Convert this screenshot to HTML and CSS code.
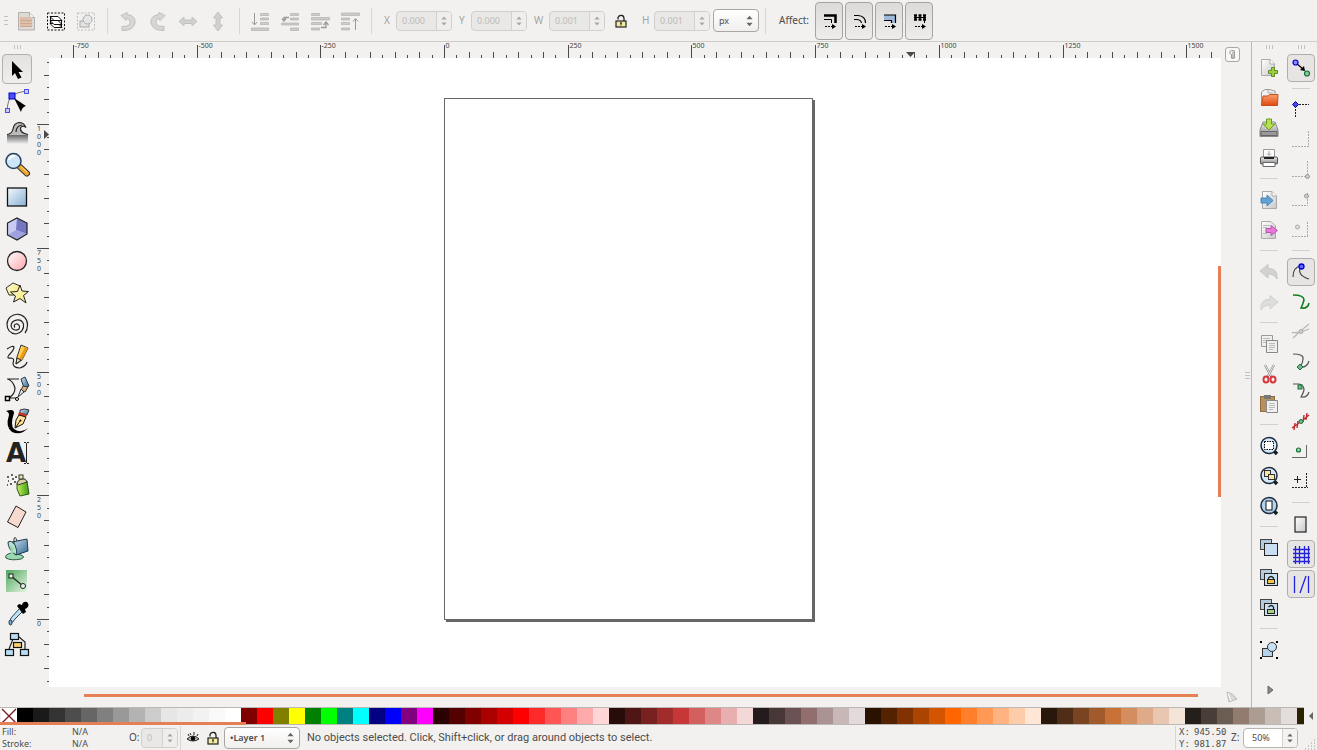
FILE: index.html
```html
<!DOCTYPE html>
<html lang="en">
<head>
<meta charset="utf-8">
<title>Drawing editor</title>
<link rel="stylesheet" href="styles.css">
</head>
<body>
<svg class="defs" width="0" height="0" aria-hidden="true">
<defs>
<linearGradient id="blue" x1="0" y1="0" x2="1" y2="1"><stop offset="0" stop-color="#f4f9fd"/><stop offset="1" stop-color="#87afd4"/></linearGradient>
<linearGradient id="pink" x1="0" y1="0" x2="1" y2="1"><stop offset="0" stop-color="#fff"/><stop offset="1" stop-color="#ffa4ac"/></linearGradient>
<linearGradient id="yellow" x1="0" y1="0" x2="1" y2="1"><stop offset="0" stop-color="#fffde0"/><stop offset="1" stop-color="#f4e468"/></linearGradient>
<linearGradient id="green" x1="0" y1="0" x2="1" y2="1"><stop offset="0" stop-color="#4fa65c"/><stop offset="1" stop-color="#e6f6e4"/></linearGradient>
<linearGradient id="lime" x1="0" y1="0" x2="1" y2="0"><stop offset="0" stop-color="#c4f060"/><stop offset="1" stop-color="#3f9a10"/></linearGradient>
<linearGradient id="steel" x1="0" y1="0" x2="1" y2="1"><stop offset="0" stop-color="#cfe4f2"/><stop offset="1" stop-color="#2f648e"/></linearGradient>
<linearGradient id="grey" x1="0" y1="0" x2="0" y2="1"><stop offset="0" stop-color="#666"/><stop offset="1" stop-color="#f0f0f0"/></linearGradient>
<linearGradient id="orange" x1="0" y1="0" x2="0" y2="1"><stop offset="0" stop-color="#f9a070"/><stop offset="1" stop-color="#e04a0c"/></linearGradient>
<linearGradient id="metal" x1="0" y1="0" x2="0" y2="1"><stop offset="0" stop-color="#eee"/><stop offset="1" stop-color="#888"/></linearGradient>
<linearGradient id="sheet" x1="0" y1="0" x2="1" y2="1"><stop offset="0" stop-color="#fff"/><stop offset="1" stop-color="#c8c8c8"/></linearGradient>
<symbol id="padlock" viewBox="0 0 12 14"><path d="M3 5.500V3.500Q4 1 7 1.500Q9.500 2 9 7" fill="none" stroke="#222" stroke-width="1.300"/><rect x="1" y="7" width="10" height="6" fill="#f3eca0" stroke="#222" stroke-width="1.200"/><path d="M6 8.500v3M5 9h2" stroke="#222"/></symbol>
<symbol id="updown" viewBox="0 0 8 12"><path d="M0.500 4L4 0L7.500 4ZM0.500 8L4 12L7.500 8Z" fill="currentColor"/></symbol>
</defs>
</svg>

<header class="toolbar">
  <span class="grip grip-row"></span>
  <button class="tool" aria-label="Select all"><svg viewBox="0 0 30 30"><path d="M7.500 6.500h11l5 5v12.500h-16Z" fill="#dedad6" stroke="#b5b0ab"/><path d="M18.500 6.500v5h5" fill="#f4f2f0" stroke="#b5b0ab"/><rect x="9" y="11" width="12" height="10" fill="#dcc0ac"/><path d="M9 14.500h12M9 17.500h12M9 20.500h12" stroke="#cda88f"/></svg></button>
  <button class="tool" aria-label="Select all in all layers"><svg viewBox="0 0 30 30"><rect x="6.500" y="7" width="17" height="17" fill="none" stroke="#111" stroke-dasharray="2 1.500"/><g fill="#fff" stroke="#111"><path d="M9 17.500h8l4 4h-8Z"/><path d="M9 14.500h8l4 4h-8Z"/><path d="M9 10.500h8l4 4h-8Z"/></g><path d="M9.500 11v7M20.500 15v6" stroke="#111"/></svg></button>
  <button class="tool" aria-label="Deselect"><svg viewBox="0 0 30 30"><rect x="6.500" y="7" width="17" height="17" fill="none" stroke="#bbb" stroke-dasharray="2 1.500"/><rect x="9" y="15" width="9" height="6" fill="#e2e2e2" stroke="#aaa"/><circle cx="16.500" cy="13.500" r="4.500" fill="#e6e6e6" stroke="#aaa"/></svg></button>
  <span class="sep"></span>
  <button class="tool" aria-label="Rotate left"><svg viewBox="0 0 30 30"><path d="M9 20.500Q15 21 17 18Q18 14 14 12L13 14.500L8 9.500L14 6.500L14.500 8.500Q23 10 22 17Q20 25 9 24.500Z" fill="#d6d6d5" stroke="#bfbfbe"/></svg></button>
  <button class="tool" aria-label="Rotate right"><svg viewBox="0 0 30 30"><path d="M21 20.500Q15 21 13 18Q12 14 16 12L17 14.500L22 9.500L16 6.500L15.500 8.500Q7 10 8 17Q10 25 21 24.500Z" fill="#d6d6d5" stroke="#bfbfbe"/></svg></button>
  <button class="tool" aria-label="Flip horizontal"><svg viewBox="0 0 30 30"><path d="M6 15.500L11 11V14H19V11L24 15.500L19 20V17.500H11V20Z" fill="#d0d0d0" stroke="#c2c2c2"/></svg></button>
  <button class="tool" aria-label="Flip vertical"><svg viewBox="0 0 30 30"><path d="M15 6L10.500 12H13V19H10.500L15 25L19.500 19H17V12H19.500Z" fill="#d0d0d0" stroke="#c2c2c2"/></svg></button>
  <span class="sep"></span>
  <button class="tool" aria-label="Lower to bottom"><svg viewBox="0 0 30 30"><g fill="#ccc" stroke="#aaa" stroke-width=".6"><path d="M15.500 7.500h8v2h-8zM15.500 12h8v2h-8zM15.500 16.500h8v2h-8zM6.500 22h17v2.500h-17z"/></g><path d="M9.500 7v11M7 16l2.500 3L12 16" fill="none" stroke="#999"/></svg></button>
  <button class="tool" aria-label="Lower"><svg viewBox="0 0 30 30"><g fill="#ccc" stroke="#aaa" stroke-width=".6"><path d="M15.500 7.500h8v2h-8zM15.500 12h8v2h-8zM6.500 17h17v2h-17zM15.500 22h8v2.500h-8z"/></g><path d="M14 11.500H9v3M7 12.500l2 2.500l2-2.500" fill="none" stroke="#999" stroke-width="1.300"/></svg></button>
  <button class="tool" aria-label="Raise"><svg viewBox="0 0 30 30"><g fill="#ccc" stroke="#aaa" stroke-width=".6"><path d="M6.500 7.500h8v2h-8zM6.500 11.500h18v2.500h-18zM6.500 16.500h10v2h-10zM6.500 22h8v2h-8z"/></g><path d="M16 21.500h5v-4M18.500 19l2.500-3l2.500 3" fill="none" stroke="#999" stroke-width="1.300"/></svg></button>
  <button class="tool" aria-label="Raise to top"><svg viewBox="0 0 30 30"><g fill="#ccc" stroke="#aaa" stroke-width=".6"><path d="M6.500 7h18v2.500h-18zM6.500 12h8v2h-8zM6.500 16.500h8v2h-8zM6.500 22h8v2h-8z"/></g><path d="M20.500 24V13M18 15.500l2.500-3l2.500 3" fill="none" stroke="#999"/></svg></button>
  <span class="sep"></span>
  <label class="field" for="fx">X</label>
  <span class="spin off"><input id="fx" value="0.000" disabled><button disabled aria-label="Step X"><svg viewBox="0 0 8 12"><use href="#updown"/></svg></button></span>
  <label class="field" for="fy">Y</label>
  <span class="spin off"><input id="fy" value="0.000" disabled><button disabled aria-label="Step Y"><svg viewBox="0 0 8 12"><use href="#updown"/></svg></button></span>
  <label class="field wide" for="fw">W</label>
  <span class="spin off"><input id="fw" value="0.001" disabled><button disabled aria-label="Step W"><svg viewBox="0 0 8 12"><use href="#updown"/></svg></button></span>
  <button class="lock" aria-label="Lock ratio"><svg viewBox="0 0 12 14"><use href="#padlock"/></svg></button>
  <label class="field" for="fh">H</label>
  <span class="spin off"><input id="fh" value="0.001" disabled><button disabled aria-label="Step H"><svg viewBox="0 0 8 12"><use href="#updown"/></svg></button></span>
  <span class="drop unit"><select aria-label="Unit"><option>px</option></select><svg viewBox="0 0 8 12"><use href="#updown"/></svg></span>
  <span class="sep"></span>
  <span class="affect">Affect:</span>
  <div class="affects">
    <button aria-label="Scale stroke width"><svg viewBox="0 0 28 36"><path d="M8 12.500H19.500V20" fill="none" stroke="#000" stroke-width="2.500"/><path d="M8 16.500H15.500V20" fill="none" stroke="#000"/><path d="M9 23.500h7" stroke="#000" stroke-dasharray="2 1"/><path d="M16 21l4 2.500l-4 2.500Z"/></svg></button>
    <button aria-label="Scale rounded corners"><svg viewBox="0 0 28 36"><path d="M8 12.500H12Q19.500 13 19.500 20M8 16.500H11Q15 17 15.500 20" fill="none" stroke="#000" stroke-width="1.200"/><path d="M9 23.500h7" stroke="#000" stroke-dasharray="2 1"/><path d="M16 21l4 2.500l-4 2.500Z"/></svg></button>
    <button aria-label="Move gradients"><svg viewBox="0 0 28 36"><path d="M8 12H19.500V20H16V17H8Z" fill="#9eb9da"/><path d="M8 12H19.500V20M8 17.500H15.500V20" fill="none" stroke="#000" stroke-width="1.200"/><path d="M9 23.500h7" stroke="#000" stroke-dasharray="2 1"/><path d="M16 21l4 2.500l-4 2.500Z"/></svg></button>
    <button aria-label="Move patterns"><svg viewBox="0 0 28 36"><path d="M8 12.500H20M8 16.500H20" stroke="#000" stroke-width="2.500" stroke-dasharray="3 1.500"/><path d="M8 14.500H20M9.500 12v5M14 12v5M18.500 12v8" stroke="#000"/><path d="M9 23.500h7" stroke="#000" stroke-dasharray="2 1"/><path d="M16 21l4 2.500l-4 2.500Z"/></svg></button>
  </div>
</header>

<main class="work">
  <nav class="toolbox" aria-label="Tools">
    <span class="grip grip-col"></span>
    <button class="on" aria-label="Selector"><svg viewBox="0 0 32 32"><path d="M11 8V23L14 20L17 26L20.500 24.500L17.500 19H22Z"/></svg></button>
    <button aria-label="Node editor"><svg viewBox="0 0 32 32"><path d="M6 25Q7 14 11 11Q16 7 25 6" fill="none" stroke="#777"/><rect x="8" y="8" width="6" height="6" fill="#4a50f0" stroke="#0000c8"/><rect x="23.500" y="4.500" width="4" height="4" fill="#c8c8ff" stroke="#5050e0"/><rect x="4.500" y="23.500" width="4" height="4" fill="#c8c8ff" stroke="#5050e0"/><path d="M13 13L25 21Q21 22 20 27Z"/></svg></button>
    <button aria-label="Tweak"><svg viewBox="0 0 32 32"><path d="M6 18H27V27H6Z" fill="url(#grey)"/><path d="M6 18Q11 18 12 13Q12 6 18 5.500Q23 5.500 24.500 10Q21 8 19.500 11Q19 16 27 18Z" fill="#bbb"/><path d="M6 17.500Q11 17 12 12Q13 6 18 5.500Q23 5.500 24.500 10Q21 8 19.500 11Q19 16 27 17.500M15 15Q15 9 21 8" fill="none" stroke="#222" stroke-width="1.200"/></svg></button>
    <button aria-label="Zoom"><svg viewBox="0 0 32 32"><path d="M19 18L26 24.500" stroke="#333" stroke-width="6" stroke-linecap="round"/><path d="M19 18L26 24.500" stroke="#f3a62c" stroke-width="4" stroke-linecap="round"/><path d="M20 17.500L26 23" stroke="#ffe08a"/><circle cx="12.500" cy="12" r="7.500" fill="#cfe5f8" stroke="#27425e" stroke-width="1.500"/><path d="M8 11Q9 7 14 7" fill="none" stroke="#fff" stroke-width="2"/></svg></button>
    <button aria-label="Rectangle"><svg viewBox="0 0 32 32"><rect x="6.500" y="7" width="19" height="18" fill="url(#blue)" stroke="#111" stroke-width="1.300"/></svg></button>
    <button aria-label="3D box"><svg viewBox="0 0 32 32"><path d="M16 5L26 10V21L16 27L6.500 22V10Z" fill="#c9cbf2"/><path d="M16 5L26 10V21L15 17Z" fill="#7376c0"/><path d="M6.500 22L15 17L26 21L16 27Z" fill="#9fa2dc"/><path d="M16 5L26 10V21L16 27L6.500 22V10Z" fill="none" stroke="#222" stroke-width="1.200"/></svg></button>
    <button aria-label="Ellipse"><svg viewBox="0 0 32 32"><circle cx="16" cy="16" r="9.500" fill="url(#pink)" stroke="#222" stroke-width="1.300"/></svg></button>
    <button aria-label="Star"><svg viewBox="0 0 32 32"><path d="M12 6L19 9L18 18H8L5 11Z" fill="url(#yellow)" stroke="#333"/><path d="M19 8L21 14L27.500 14.500L22.500 18.500L25 26L19 21.500L12.500 25L14.500 19L9.500 15L16.500 14.500Z" fill="url(#yellow)" stroke="#222"/></svg></button>
    <button aria-label="Spiral"><svg viewBox="0 0 32 32"><path d="M14 18.500A2 2 0 0 1 15 15A3.200 3.200 0 0 1 18 20A5 5 0 0 1 10 17A6.500 6.500 0 0 1 22.500 15A8.500 8.500 0 0 1 15 25Q6 24 6 15A10 10 0 0 1 26.500 16Q26.500 21 24 24" fill="none" stroke="#222" stroke-width="1.200"/></svg></button>
    <button aria-label="Pencil"><svg viewBox="0 0 32 32"><path d="M6 8Q12 4 13 6Q13 9 8 14Q5 18 10 17Q14 17 12 22Q12 27 19 27Q25 25 26 21" fill="none" stroke="#222" stroke-width="1.200"/><path d="M15 23L16 16L20 4L27 7L21 19Z" fill="#ffd24a" stroke="#333"/><path d="M24 6L27 7L21 19L18 18Z" fill="#e89a18"/><path d="M15 23L16 17L20 19Z" fill="#f4e4c0" stroke="#222"/></svg></button>
    <button aria-label="Bezier"><svg viewBox="0 0 32 32"><path d="M6 6H18M7 6Q12 8 14 15Q14 21 8 25H16" fill="none" stroke="#222" stroke-width="1.200"/><rect x="4.500" y="23.500" width="4" height="4" fill="#fff" stroke="#000" stroke-width="1.500"/><circle cx="16" cy="26" r="1.500" fill="#fff" stroke="#000"/><path d="M20 6L24 4L28 13L23 15Z" fill="url(#steel)" stroke="#24384a"/><path d="M22 13L27 14L24 19L20 17Z" fill="#d8b080" stroke="#333"/><path d="M20 16L23 19L17 24Z" fill="#d5e8f6" stroke="#333"/></svg></button>
    <button aria-label="Calligraphy"><svg viewBox="0 0 32 32"><path d="M5 6Q13 3 13 8Q9 20 13 24Q20 29 27 23Q20 31 11 27Q4 22 8 10Q8 7 5 6Z"/><path d="M19 5Q23 3 28 5L26 10L19 8Z" fill="url(#steel)" stroke="#333"/><path d="M18 7L26 10L25 12L17 10Z" fill="#d83222"/><path d="M18 10L25 12L22 19L14 23L15 15Z" fill="#ffe39a" stroke="#111"/><path d="M15 22L19 16" stroke="#111"/><circle cx="19.500" cy="15.500" r="1"/></svg></button>
    <button aria-label="Text"><svg viewBox="0 0 32 32"><text x="5" y="25" class="glyph-a">A</text><path d="M25.500 6V26M23 5.500h2M26 5.500h2M23 26.500h2M26 26.500h2" stroke="#222"/></svg></button>
    <button aria-label="Spray"><svg viewBox="0 0 32 32"><path d="M6 8h2M10 6h2M7 12h1M11 10h2M14 8h2M9 15h2M13 13h2M6 16h1" stroke="#333" stroke-width="1.300"/><path d="M16 14L26 12L28 25L19 27L16 20Z" fill="url(#lime)" stroke="#315914"/><path d="M16 14Q18 9 24 10L26 13L17 16Z" fill="#d9d3a4" stroke="#333"/><rect x="18" y="6" width="4" height="4" fill="#eee7a0" stroke="#333"/></svg></button>
    <button aria-label="Eraser"><svg viewBox="0 0 32 32"><path d="M15 5L25 11L17 26.500L6.500 21Z" fill="#f8d9cd" stroke="#222" stroke-linejoin="round"/></svg></button>
    <button aria-label="Paint bucket"><svg viewBox="0 0 32 32"><path d="M10 20Q3 22 5 25Q10 28 20 26Q25 24 20 22Z" fill="#9ad8b2" stroke="#2b5940"/><path d="M11 9L26 6L27 18L15 22Z" fill="url(#steel)" stroke="#1d3b52"/><path d="M7 9Q11 7 14 12Q17 18 15 22Q11 20 9 16Q7 13 7 9Z" fill="#b8e2cc" stroke="#1d3b52"/><path d="M8 12Q11 17 9 24H13Q11 18 13 15Z" fill="#9ad8b2"/><path d="M13 11V6Q14 2 16 8" fill="none" stroke="#333"/></svg></button>
    <button aria-label="Gradient"><svg viewBox="0 0 32 32"><rect x="5" y="5" width="21" height="22" fill="url(#green)"/><path d="M10 11L22 21" stroke="#222" stroke-width="1.200"/><rect x="8" y="9" width="4" height="4" fill="#e9f5e9" stroke="#222"/><circle cx="22" cy="21" r="2.500" fill="#e9f5e9" stroke="#222"/></svg></button>
    <button aria-label="Dropper"><svg viewBox="0 0 32 32"><path d="M18 12L10 21Q8 25 9 26Q12 26 14 22L21 15" fill="#bfe0f4" stroke="#345"/><path d="M16 9L18 7L21 8Q22 4 26 5Q29 8 26 11L24 12L25 15L22 17Z"/><ellipse cx="9.500" cy="25.500" rx="1.500" ry="2.500" fill="#72b2dc" stroke="#234"/></svg></button>
    <button aria-label="Connector"><svg viewBox="0 0 32 32"><path d="M12 10L8 20M18 8L24 13V20" fill="none" stroke="#222" stroke-width="1.200"/><g stroke="#111" stroke-width="1.200"><rect x="9.500" y="4.500" width="8" height="6" fill="#b8dcf4"/><rect x="12.500" y="13.500" width="8" height="5" fill="#fbd06c"/><rect x="4.500" y="20.500" width="8" height="6" fill="#b8dcf4"/><rect x="19.500" y="20.500" width="8" height="6" fill="#b8dcf4"/></g></svg></button>
  </nav>

  <svg class="ruler-h" id="ruler-h" role="img" aria-label="Horizontal ruler"></svg>
  <svg class="ruler-v" id="ruler-v" role="img" aria-label="Vertical ruler"></svg>
  <section class="canvas" aria-label="Canvas"><div class="paper"></div></section>
  <div class="vbar"></div>
  <div class="hbar"></div>
  <div class="edge">
    <button class="cms" aria-label="Guides toggle"><svg viewBox="0 0 14 14"><path d="M4 4Q5 2 9 3V11H6V7Q4 7 4 4Z" fill="#fff" stroke="#888"/><path d="M7.500 4v7" stroke="#888"/></svg></button>
    <span class="grip edge-grip"></span>
    <svg class="corner" viewBox="0 0 14 14"><path d="M2 2Q8 3 12 9L4 12Z" fill="#d8d8d6" stroke="#bbb"/><path d="M3 3L6 11" stroke="#fff"/></svg>
  </div>

  <div class="dock commands">
    <span class="grip grip-col"></span>
    <button aria-label="New"><svg viewBox="0 0 30 30"><path d="M7.500 6.500H16L20.500 11V22.500H7.500Z" fill="url(#sheet)" stroke="#aaa"/><path d="M16 6.500V11h4.500" fill="#fff" stroke="#aaa"/><path d="M17.500 14.500h3v3h3v3h-3v3h-3v-3h-3v-3h3Z" fill="#9bcf3f" stroke="#648c26"/></svg></button>
    <button aria-label="Open"><svg viewBox="0 0 30 30"><path d="M7.500 22V9L11 6.500H15L21 8V13" fill="#f2f2f2" stroke="#999"/><path d="M14 7v3h5" fill="none" stroke="#aaa"/><path d="M9 13H14L16 11.500H24L23.500 22.500H7.500Z" fill="url(#orange)" stroke="#c4511c"/></svg></button>
    <button aria-label="Save"><svg viewBox="0 0 30 30"><path d="M9 9H21L24 17V23.500H6V17Z" fill="url(#metal)" stroke="#888"/><path d="M7 18.500h16v4H7Z" fill="#999" stroke="#666"/><path d="M12.500 6h5v5H21L15 17L9 11h3.500Z" fill="#b4e04a" stroke="#6c9a24"/></svg></button>
    <button aria-label="Print"><svg viewBox="0 0 30 30"><path d="M9.500 15V6.500h11V15" fill="#fff" stroke="#999"/><path d="M15 8v4M13 10.500l2 2l2-2" fill="none" stroke="#999"/><rect x="6.500" y="14" width="17" height="7" rx="1" fill="url(#metal)" stroke="#555"/><path d="M10 15h10" stroke="#222" stroke-width="2"/><path d="M9 19.500h12v4H9Z" fill="#fff" stroke="#666"/></svg></button>
    <span class="rule"></span>
    <button aria-label="Import"><svg viewBox="0 0 30 30"><path d="M8.500 6.500H18L22.500 11V23.500H8.500Z" fill="url(#sheet)" stroke="#aaa"/><path d="M18 6.500V11h4.500" fill="#fff" stroke="#aaa"/><path d="M7 13h6v-3l6 5.500l-6 5.500v-3H7Z" fill="#61a1d3" stroke="#4a86b5"/></svg></button>
    <button aria-label="Export"><svg viewBox="0 0 30 30"><path d="M7.500 6.500H17L21.500 11V23.500H7.500Z" fill="url(#sheet)" stroke="#aaa"/><path d="M9 10.500h7M9 12.500h4M9 18.500h4" stroke="#bbb"/><path d="M12 13.500h5v-3l6.500 5l-6.500 5v-3h-5Z" fill="#ea78dc" stroke="#b658aa"/></svg></button>
    <span class="rule"></span>
    <button aria-label="Undo"><svg viewBox="0 0 30 30"><path d="M6 14L14 7.500V11.500Q24 11 23 22Q20 17 14 17V21Z" fill="#d2d2d0" stroke="#c6c6c4"/></svg></button>
    <button aria-label="Redo"><svg viewBox="0 0 30 30"><path d="M24 15L16 8.500V12.500Q6 12 7 23Q10 18 16 18V22Z" fill="#dededc" stroke="#d0d0ce"/></svg></button>
    <span class="rule"></span>
    <button aria-label="Copy"><svg viewBox="0 0 30 30"><path d="M7.500 6.500h11v11h-11Z" fill="#f0f0ee" stroke="#999"/><path d="M9 9.500h7M9 11.500h7M9 13.500h7" stroke="#bbb"/><path d="M12.500 11.500h11v12h-11Z" fill="#f0f0ee" stroke="#888"/><path d="M15 14.500h6M15 16.500h6M15 18.500h6M15 20.500h4" stroke="#bbb"/></svg></button>
    <button aria-label="Cut"><svg viewBox="0 0 30 30"><path d="M11 6L18 19M20 6L13 19" stroke="#888" stroke-width="2.200"/><path d="M11 6L17 17M20 6L14 17" stroke="#eee"/><ellipse cx="12" cy="20.500" rx="2.500" ry="3" fill="none" stroke="#d8383c" stroke-width="2"/><ellipse cx="19" cy="20.500" rx="2.500" ry="3" fill="none" stroke="#d8383c" stroke-width="2"/></svg></button>
    <button aria-label="Paste"><svg viewBox="0 0 30 30"><rect x="6.500" y="7.500" width="14" height="15" fill="#b8905c" stroke="#8f6c40"/><rect x="10" y="6" width="7" height="4" fill="#777"/><path d="M12.500 11.500h11v12h-11Z" fill="#f0f0ee" stroke="#888"/><path d="M15 14.500h6M15 16.500h6M15 18.500h6M15 20.500h4" stroke="#bbb"/></svg></button>
    <span class="rule"></span>
    <button aria-label="Zoom selection"><svg viewBox="0 0 30 30"><path d="M20 20L23 23" stroke="#122" stroke-width="3.500"/><circle cx="15" cy="14.500" r="8" fill="#d8eafa" stroke="#1c2c3c" stroke-width="1.500"/><rect x="10.500" y="10.500" width="9" height="8" fill="#fff" stroke="#000" stroke-dasharray="1.500 1"/></svg></button>
    <button aria-label="Zoom drawing"><svg viewBox="0 0 30 30"><path d="M20 20L23 23" stroke="#122" stroke-width="3.500"/><circle cx="15" cy="14.500" r="8" fill="#d8eafa" stroke="#1c2c3c" stroke-width="1.500"/><rect x="10.500" y="9.500" width="6" height="6" fill="#f8e6a8" stroke="#333"/><rect x="14.500" y="13.500" width="6" height="5" fill="#f8e6a8" stroke="#333"/></svg></button>
    <button aria-label="Zoom page"><svg viewBox="0 0 30 30"><path d="M20 20L23 23" stroke="#122" stroke-width="3.500"/><circle cx="15" cy="14.500" r="8" fill="#b5d2ec" stroke="#1c2c3c" stroke-width="1.500"/><rect x="12" y="10" width="6" height="9" fill="#fff" stroke="#111"/></svg></button>
    <span class="rule"></span>
    <button aria-label="Duplicate"><svg viewBox="0 0 30 30"><rect x="6.500" y="6.500" width="11" height="10" fill="#b6cade" stroke="#444"/><rect x="10.500" y="10.500" width="13" height="12" fill="#c9def0" stroke="#222"/></svg></button>
    <button aria-label="Clone"><svg viewBox="0 0 30 30"><rect x="6.500" y="6.500" width="11" height="10" fill="#b6cade" stroke="#444"/><rect x="10.500" y="10.500" width="13" height="12" fill="#c9def0" stroke="#222"/><path d="M14.500 17v-2q2.500-3 5 0v2" fill="none" stroke="#222" stroke-width="1.300"/><rect x="13.500" y="16.500" width="7" height="4" fill="#f6c840" stroke="#222"/></svg></button>
    <button aria-label="Unlink clone"><svg viewBox="0 0 30 30"><rect x="6.500" y="6.500" width="11" height="10" fill="#b6cade" stroke="#444"/><rect x="10.500" y="10.500" width="13" height="12" fill="#c9def0" stroke="#222"/><path d="M14.500 14q3-3 5 0v2" fill="none" stroke="#222" stroke-width="1.300"/><rect x="13.500" y="16.500" width="7" height="4" fill="#a9d08a" stroke="#222"/></svg></button>
    <span class="rule"></span>
    <button aria-label="Group"><svg viewBox="0 0 30 30"><rect x="8.500" y="13.500" width="10" height="8" fill="#b5d2ec" stroke="#333"/><circle cx="18" cy="12" r="4.500" fill="#c9e2f5" stroke="#333"/><path d="M6 6h2v2H6ZM22 6h2v2h-2ZM6 22h2v2H6ZM22 22h2v2h-2Z"/></svg></button>
    <button class="more" aria-label="More commands"><svg viewBox="0 0 30 30"><path d="M14 11L19 15L14 19Z" fill="#888" stroke="#666"/></svg></button>
  </div>

  <div class="dock snaps">
    <span class="grip grip-col"></span>
    <button class="on" aria-label="Enable snapping"><svg viewBox="0 0 30 30"><path d="M9 9L18 17" stroke="#000" stroke-width="1.200"/><path d="M19 18L14 17L18 13Z"/><circle cx="9.500" cy="9.500" r="2.500" fill="#8a8aff" stroke="#0000d0" stroke-width="1.200"/><circle cx="21" cy="20.500" r="2.500" fill="#88c898" stroke="#167038" stroke-width="1.200"/></svg></button>
    <span class="rule"></span>
    <button aria-label="Snap bounding boxes"><svg viewBox="0 0 30 30"><path d="M10 9.500H23M9.500 11V23" stroke="#222" stroke-dasharray="2 1"/><path d="M9.500 6.500L12.500 9.500L9.500 12.500L6.500 9.500Z" fill="#4848ee" stroke="#0000a8"/></svg></button>
    <button aria-label="Snap box edges"><svg viewBox="0 0 30 30"><path d="M6 21.500H22M22.500 6V22" stroke="#aaa" stroke-dasharray="2 1"/></svg></button>
    <button aria-label="Snap box corners"><svg viewBox="0 0 30 30"><path d="M6 21.500H22M21.500 6V22" stroke="#aaa" stroke-dasharray="2 1"/><circle cx="21.500" cy="21.500" r="2" fill="#ccc" stroke="#999"/></svg></button>
    <button aria-label="Snap edge midpoints"><svg viewBox="0 0 30 30"><path d="M6 20.500H22M21.500 8V21" stroke="#aaa" stroke-dasharray="2 1"/><circle cx="20.500" cy="11" r="2" fill="#ccc" stroke="#999"/></svg></button>
    <button aria-label="Snap box centers"><svg viewBox="0 0 30 30"><path d="M6 21.500H22M21.500 7V22" stroke="#aaa" stroke-dasharray="2 1"/><circle cx="11.500" cy="12" r="2" fill="#ddd" stroke="#aaa"/></svg></button>
    <span class="rule"></span>
    <button class="on" aria-label="Snap nodes"><svg viewBox="0 0 30 30"><path d="M7 20Q7 10 15 9M15 9Q10 18 23 22" fill="none" stroke="#444" stroke-width="1.200"/><circle cx="15.500" cy="9.500" r="2.500" fill="#6868ff" stroke="#0000d0" stroke-width="1.300"/></svg></button>
    <button aria-label="Snap paths"><svg viewBox="0 0 30 30"><path d="M7 8Q18 8 18 13Q17 17 15 21Q22 22 23 16" fill="none" stroke="#128020" stroke-width="1.600"/></svg></button>
    <button aria-label="Snap intersections"><svg viewBox="0 0 30 30"><path d="M7 21Q14 14 23 7M6 15.500Q14 16 23 12" fill="none" stroke="#b8b8b8" stroke-width="1.300"/><circle cx="15" cy="14.500" r="2" fill="#ccc" stroke="#aaa"/></svg></button>
    <button aria-label="Snap cusp nodes"><svg viewBox="0 0 30 30"><path d="M7 7Q18 7 17 12Q17 16 14 20Q21 21 23 14" fill="none" stroke="#555" stroke-width="1.200"/><path d="M14 17L17 20L14 23L11 20Z" fill="#75b78c" stroke="#167038"/></svg></button>
    <button aria-label="Snap smooth nodes"><svg viewBox="0 0 30 30"><path d="M7 7H13Q18 8 18 13Q17 17 15 20Q21 21 23 15" fill="none" stroke="#555" stroke-width="1.200"/><rect x="12" y="8" width="4" height="4" fill="#75b78c" stroke="#167038"/></svg></button>
    <button aria-label="Snap line midpoints"><svg viewBox="0 0 30 30"><path d="M6 21L13 16M17 13L23 8M9 16L8 23M12 14L11 21M18 8L17 15M21 6L20 13" stroke="#c02a30" stroke-width="1.400"/><circle cx="15" cy="14.500" r="2" fill="#75b78c" stroke="#167038"/></svg></button>
    <button aria-label="Snap object centers"><svg viewBox="0 0 30 30"><path d="M6 20.500H20.500V8" fill="none" stroke="#666"/><circle cx="12.500" cy="13" r="2" fill="#a7d8b5" stroke="#167038" stroke-width="1.200"/></svg></button>
    <button aria-label="Snap rotation centers"><svg viewBox="0 0 30 30"><path d="M6 20.500H22M20.500 6V21" stroke="#222" stroke-dasharray="2 1"/><path d="M8 12.500h7M11.500 9v7" stroke="#222"/></svg></button>
    <span class="rule"></span>
    <button aria-label="Snap page border"><svg viewBox="0 0 30 30"><rect x="9" y="8" width="11" height="15" fill="url(#sheet)" stroke="#222" stroke-width="1.200"/></svg></button>
    <button class="on" aria-label="Snap grids"><svg viewBox="0 0 30 30"><path d="M7 10.500H24M7 14.500H24M7 18.500H24M7 22.500H24M9.500 7V25M13.500 7V25M18.500 7V25M22.500 7V25" stroke="#2222dc" stroke-width="1.300"/></svg></button>
    <button class="on" aria-label="Snap guides"><svg viewBox="0 0 30 30"><path d="M8.500 7V24M22.500 7V24M14 24L20 7" stroke="#2222dc" stroke-width="1.300"/></svg></button>
  </div>
</main>

<div class="palette">
  <div class="swatches" id="swatches"><button class="none" aria-label="No colour"><svg viewBox="0 0 16 16"><path d="M1 1L15 15M15 1L1 15" stroke="#7a1a22" stroke-width="1.400"/></svg></button></div>
  <div class="progress"></div>
  <button class="menu" aria-label="Palette menu"><svg viewBox="0 0 8 10"><path d="M6 1V9L2 5Z" fill="#666"/></svg></button>
</div>

<footer class="status">
  <dl class="paint"><dt>Fill:</dt><dd>N/A</dd><dt>Stroke:</dt><dd>N/A</dd></dl>
  <label class="opacity" for="op">O:</label>
  <span class="spin off small"><input id="op" value="0" disabled><button disabled aria-label="Step opacity"><svg viewBox="0 0 8 12"><use href="#updown"/></svg></button></span>
  <span class="bar"></span>
  <button class="eye" aria-label="Layer visibility"><svg viewBox="0 0 14 12"><path d="M1 7Q7 1 13 7Q7 11 1 7Z" fill="#bbb" stroke="#222"/><circle cx="7" cy="6.500" r="2.200"/><path d="M3 4L2 2M5 3L4 1M8 3V0M11 4L12 2" stroke="#222"/></svg></button>
  <button class="lock layer-lock" aria-label="Lock layer"><svg viewBox="0 0 12 14"><use href="#padlock"/></svg></button>
  <span class="drop layer"><select aria-label="Layer"><option>•Layer 1</option></select><svg viewBox="0 0 8 12"><use href="#updown"/></svg></span>
  <p class="message">No objects selected. Click, Shift+click, or drag around objects to select.</p>
  <dl class="coords"><dt>X:</dt><dd>945.50</dd><dt>Y:</dt><dd>981.87</dd></dl>
  <label class="zoom" for="zm">Z:</label>
  <span class="spin zoomer"><input id="zm" value="50%"><button aria-label="Step zoom"><svg viewBox="0 0 8 12"><use href="#updown"/></svg></button></span>
  <svg class="resize" viewBox="0 0 12 12"><path d="M10 2h1M7 5h1M10 5h1M4 8h1M7 8h1M10 8h1M1 11h1M4 11h1M7 11h1M10 11h1" stroke="#999"/></svg>
</footer>
<script src="app.js"></script>
</body>
</html>
```

FILE: styles.css
```css
* { box-sizing: border-box; }

body {
  margin: 0;
  height: 100vh;
  display: flex;
  flex-direction: column;
  overflow: hidden;
  background: #f2f1ef;
  color: #4c4c4c;
  font: 10px/13px "Noto Sans", "Open Sans", sans-serif;
}

button, input, select { font: inherit; color: inherit; margin: 0; padding: 0; border: 0; background: none; }
button { display: grid; place-items: center; }
svg { display: block; }
.defs { position: absolute; }

/* Top toolbar */
.toolbar { display: flex; align-items: center; flex: none; height: 42px; border-bottom: 1px solid #cfcdca; white-space: nowrap; }
.tool { width: 30px; height: 30px; flex: none; }
.tool svg { width: 30px; height: 30px; }
.sep { flex: none; width: 12px; height: 26px; background: linear-gradient(#d8d6d3, #d8d6d3) center / 1px 100% no-repeat; }
.grip { flex: none; }
.grip-row { width: 4px; height: 9px; margin: 0 3px 0 4px; background: repeating-linear-gradient(#c4c2bf 0 1px, transparent 1px 4px); }
.grip-col { width: 7px; height: 4px; margin: 3px 0 4px; background: repeating-linear-gradient(90deg, #c4c2bf 0 1px, transparent 1px 3px); }
.field { width: 19px; padding-left: 7px; color: #a5a4a2; }
.wide { width: 22px; }

.spin { display: flex; flex: none; width: 56px; height: 20px; border: 1px solid #b8b6b3; border-radius: 4px; background: #fff; overflow: hidden; }
.spin input { flex: 1; min-width: 0; padding-left: 5px; border-right: 1px solid #d3d1ce; outline: 0; font-size: 9px; }
.spin button { width: 14px; background: #f4f3f2; color: #666; }
.spin svg { width: 6px; height: 10px; }
.off { border-color: #d1cfcc; background: #e9e8e6; }
.off input { color: #bdbbb8; }
.off button { color: #a9a7a4; background: #efeeec; }
.lock { width: 32px; height: 20px; }
.lock svg { width: 12px; height: 14px; }
.lock + .field { width: 17px; padding-left: 5px; }

.drop { display: grid; flex: none; align-items: center; border: 1px solid #a9a7a4; border-radius: 4px; background: linear-gradient(#fff, #f0efed); }
.drop > * { grid-area: 1 / 1; }
.drop select { appearance: none; width: 100%; height: 100%; outline: 0; }
.drop svg { width: 7px; height: 12px; justify-self: end; margin-right: 5px; pointer-events: none; color: #666; }
.unit { width: 46px; height: 23px; margin-left: 3px; font-size: 9px; }
.unit select { padding-left: 5px; }
.affect { padding: 0 6px 0 8px; }
.affects { display: flex; gap: 2px; }
.affects button { width: 28px; height: 38px; border: 1px solid #a6a4a1; border-radius: 4px; background: linear-gradient(#dddbd9, #eeedeb); }
.affects svg { width: 28px; height: 36px; }

/* Work area */
.work {
  flex: 1;
  min-height: 0;
  display: grid;
  grid-template: 16px minmax(0, 1fr) 20px / 36px 13px minmax(0, 1fr) 31px 33px 32px;
}
.toolbox { grid-area: 1 / 1 / 4 / 2; display: flex; flex-direction: column; align-items: center; padding-right: 2px; }
.toolbox button { flex: none; width: 32px; height: 32px; }
.toolbox svg { width: 32px; height: 32px; flex: none; }
.toolbox .on { width: 30px; height: 30px; margin: 1px 0; border: 1px solid #b3b1ae; border-radius: 4px; background: linear-gradient(#e3e2e0, #efeeec); }
.toolbox .on svg { margin: -2px; }
.glyph-a { font: bold 26px "DejaVu Sans", sans-serif; fill: #222; }

.ruler-h { grid-area: 1 / 3; width: 100%; height: 16px; }
.ruler-v { grid-area: 2 / 2; width: 13px; height: 100%; }
.ruler-h text, .ruler-v text { font-size: 7px; fill: #444; }
.ruler-h path, .ruler-v path { stroke: #4a4a4a; }
.ruler-h .mark, .ruler-v .mark { fill: #4a4a4a; stroke: none; }
.canvas { grid-area: 2 / 3; position: relative; background: #fff; overflow: hidden; }
.paper { position: absolute; left: 395px; top: 40px; width: 369px; height: 522px; background: #fff; border: 1px solid #666; box-shadow: 2px 2px 0 #666; }
.vbar { grid-area: 2 / 3; z-index: 1; justify-self: end; width: 3px; height: 231px; margin-top: 208px; background: #e57f54; }
.hbar { grid-area: 3 / 3; height: 3px; margin: 7px 23px 0 35px; background: #e57f54; }
.edge { grid-area: 1 / 4 / 4 / 5; display: flex; flex-direction: column; justify-content: space-between; align-items: center; padding: 5px 8px 3px 4px; border-right: 1px solid #bab8b5; }
.cms { width: 15px; height: 15px; border: 1px solid #a9a7a4; border-radius: 3px; background: #f8f7f6; align-self: flex-start; }
.cms svg { width: 13px; height: 13px; }
.edge-grip { width: 5px; height: 8px; align-self: flex-end; margin-right: -7px; background: repeating-linear-gradient(#c4c2bf 0 1px, transparent 1px 3px); }
.corner { width: 14px; height: 14px; align-self: flex-start; }

.dock { display: flex; flex-direction: column; align-items: center; grid-row: 1 / 4; overflow: hidden; }
.commands { grid-column: 5; padding-left: 1px; }
.snaps { grid-column: 6; }
.dock button { flex: none; width: 30px; height: 30px; }
.dock svg { width: 30px; height: 30px; flex: none; }
.dock .on { width: 28px; height: 28px; margin: 1px 0; border: 1px solid #b0aeab; border-radius: 4px; background: #e6e5e3; }
.dock .on svg { margin: -2px; }
.rule { flex: none; width: 18px; height: 12px; background: linear-gradient(#d2d0cd, #d2d0cd) center 5px / 100% 1px no-repeat; }
.dock .more { margin-top: 10px; }

/* Palette */
.palette { flex: none; display: grid; grid-template-columns: minmax(0, 1fr) 13px; height: 18px; align-items: center; }
.swatches { grid-area: 1 / 1; display: flex; height: 18px; padding-left: 1px; overflow: hidden; border: solid #bbb8b5; border-width: 1px 0; }
.swatches button { flex: none; width: 16px; height: 16px; }
.swatches .none { background: #fff; }
.none svg { width: 16px; height: 16px; }
.progress { grid-area: 1 / 1; align-self: end; z-index: 1; width: 246px; height: 3px; background: #e57f54; }
.menu { grid-area: 1 / 2; }
.menu svg { width: 8px; height: 10px; }

/* Status bar */
.status { flex: none; display: flex; align-items: center; height: 25px; padding-left: 2px; white-space: nowrap; }
dl { margin: 0; display: grid; }
dd, p { margin: 0; }
.paint { width: 127px; grid-template-columns: 70px 1fr; font-size: 9px; line-height: 12px; }
.opacity { width: 12px; }
.small { width: 37px; }
.bar { width: 1px; height: 24px; margin: 0 4px 0 2px; background: #d8d6d3; }
.eye { width: 16px; height: 16px; }
.eye svg { width: 14px; height: 12px; }
.layer-lock { width: 23px; }
.layer { width: 76px; height: 22px; font-weight: 600; font-size: 9px; }
.layer select { padding-left: 5px; }
.message { flex: 1; min-width: 0; padding-left: 7px; overflow: hidden; font: 11px/16px Roboto, sans-serif; }
.coords { grid-template-columns: 15px 37px; padding-left: 3px; border-left: 1px solid #d8d6d3; font: 9px/12px "DejaVu Sans Mono", monospace; }
.zoom { width: 12px; }
.zoomer { width: 55px; }
.zoomer input { padding-left: 8px; }
.resize { width: 12px; height: 12px; margin: 0 1px 0 6px; align-self: flex-end; }
```

FILE: app.js
```js
const colours = `000000 1a1a1a 333333 4d4d4d 666666 808080 999999 b3b3b3 cccccc e6e6e6 ececec f2f2f2 f9f9f9 ffffff
800000 ff0000 808000 ffff00 008000 00ff00 008080 00ffff 000080 0000ff 800080 ff00ff
2b0000 550000 800000 aa0000 d40000 ff0000 ff2a2a ff5555 ff8080 ffaaaa ffd5d5
280b0b 501616 782121 a02c2c c83737 d35f5f de8787 e9afaf f4d7d7
241c1c 483737 6c5353 916f6f ac9393 c8b7b7 e3dbdb
2b1100 552200 803300 aa4400 d45500 ff6600 ff7f2a ff9955 ffb380 ffccaa ffe6d5
28170b 502d16 784421 a05a2c c87137 d38d5f deaa87 e9c6af f4e3d7
241f1c 483e37 6c5d53 917c6f ac9d93 c8beb7 e3dedb 2b2200`.split(/\s+/);

const swatches = document.getElementById('swatches');
for (const c of colours) {
  const b = document.createElement('button');
  b.setAttribute('aria-label', '#' + c);
  b.style.background = '#' + c;
  swatches.append(b);
}

// One tick every 25 units; a labelled one every 250.
const STEP = 12.37;
const rulerH = document.getElementById('ruler-h');
const rulerV = document.getElementById('ruler-v');

function tickLength(i) {
  return i % 10 === 0 ? 13 : i % 2 === 0 ? 6 : 3;
}

function drawRulers() {
  const width = rulerH.clientWidth;
  const height = rulerV.clientHeight;

  let h = '';
  for (let i = -31; 395 + i * STEP < width - 2; i++) {
    const x = Math.round(395 + i * STEP) + 0.5;
    h += `<path d="M${x} 16v-${tickLength(i)}"/>`;
    if (i % 10 === 0 && x + 18 < width) h += `<text x="${x + 1}" y="6">${i * 25}</text>`;
  }
  rulerH.innerHTML = h + '<path class="mark" d="M857 10h9l-4.500 5z"/>';

  let v = '';
  for (let i = 45; 561 - i * STEP < height; i--) {
    const y = Math.round(561 - i * STEP) + 0.5;
    if (y < 0) continue;
    v += `<path d="M13 ${y}h-${i % 10 === 0 ? 12 : tickLength(i) - 1}"/>`;
    if (i % 10 === 0) {
      [...String(i * 25)].forEach((d, n) => { v += `<text x="1" y="${y + 6.5 + n * 8}">${d}</text>`; });
    }
  }
  rulerV.innerHTML = v + '<path class="mark" d="M8 72v9l5-4.500z"/>';
}

drawRulers();
addEventListener('resize', drawRulers);
```
